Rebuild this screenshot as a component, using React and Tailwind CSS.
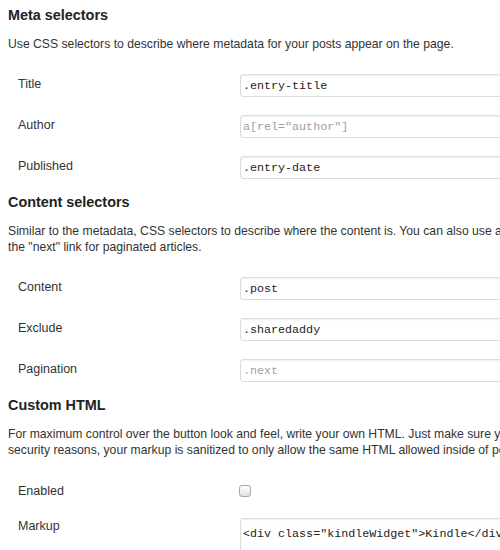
const sans = { fontFamily: '"Liberation Sans", Arial, sans-serif' };

function Field({ label, value, placeholder }) {
  return (
    <div className="flex items-center py-[9px]">
      <div className="w-[232px] shrink-0 pb-1 pl-[10px] text-[12.5px] leading-4 text-[#333]">{label}</div>
      <input
        readOnly
        value={value || ""}
        placeholder={placeholder}
        className="h-[23px] w-[360px] shrink-0 rounded-[3px] border border-[#dcdcdc] bg-white px-[2px] font-['Liberation_Mono',monospace] text-[11.7px] text-[#222] shadow-[inset_0_1px_2px_rgba(0,0,0,0.07)] outline-none placeholder:text-[#a0a0a0]"
      />
    </div>
  );
}

function Heading({ children, className = "" }) {
  return <h3 className={`h-5 text-[14.4px] font-bold leading-5 text-[#222] ${className}`}>{children}</h3>;
}

function Lines({ lines, className = "" }) {
  return (
    <div className={`text-[12.2px] leading-4 text-[#333] ${className}`}>
      {lines.map((l) => (
        <div key={l} className="whitespace-nowrap">{l}</div>
      ))}
    </div>
  );
}

export default function App() {
  return (
    <div className="h-[550px] w-[500px] overflow-hidden bg-white pl-2" style={sans}>
      <Heading className="mt-[5px]">Meta selectors</Heading>
      <Lines
        className="mt-[11px] mb-[13px]"
        lines={["Use CSS selectors to describe where metadata for your posts appear on the page."]}
      />
      <Field label="Title" value=".entry-title" />
      <Field label="Author" placeholder='a[rel="author"]' />
      <Field label="Published" value=".entry-date" />

      <Heading className="mt-1">Content selectors</Heading>
      <Lines
        className="mt-[11px] mb-[13px]"
        lines={[
          "Similar to the metadata, CSS selectors to describe where the content is. You can also use a selector for",
          'the "next" link for paginated articles.',
        ]}
      />
      <Field label="Content" value=".post" />
      <Field label="Exclude" value=".sharedaddy" />
      <Field label="Pagination" placeholder=".next" />

      <Heading className="mt-1">Custom HTML</Heading>
      <Lines
        className="mt-[11px] mb-[13px]"
        lines={[
          "For maximum control over the button look and feel, write your own HTML. Just make sure you include",
          "security reasons, your markup is sanitized to only allow the same HTML allowed inside of posts.",
        ]}
      />
      <div className="flex h-10 items-center">
        <div className="w-[231px] shrink-0 pl-[10px] text-[12.5px] leading-4 text-[#333]">Enabled</div>
        <div className="h-[12px] w-[12px] rounded-[3px] border border-[#a8a8a8] bg-gradient-to-b from-white to-[#e2e2e2]" />
      </div>
      <div className="flex items-start pt-[7px]">
        <div className="w-[232px] shrink-0 pl-[10px] text-[12.5px] leading-4 text-[#333]">Markup</div>
        <textarea
          readOnly
          value={'<div class="kindleWidget">Kindle</div>'}
          className="h-[80px] w-[360px] shrink-0 resize-none rounded-[3px] border border-[#dcdcdc] px-[2px] pt-[7px] font-['Liberation_Mono',monospace] text-[11.7px] leading-4 text-[#222] shadow-[inset_0_1px_2px_rgba(0,0,0,0.07)] outline-none"
        />
      </div>
    </div>
  );
}
